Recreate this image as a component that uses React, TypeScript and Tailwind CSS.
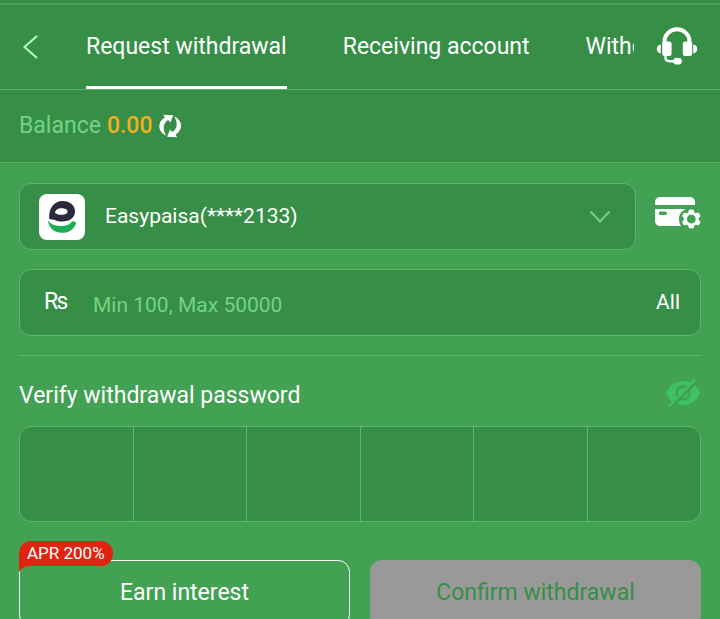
import { useState } from 'react';

const tabs = ['Request withdrawal', 'Receiving account', 'Withdrawal records'];

const accounts = [{ id: 'easypaisa', label: 'Easypaisa(****2133)' }];

function HeadsetIcon() {
  return (
    <svg viewBox="0 0 42 38" className="h-[38px] w-[42px]" fill="none">
      <path d="M8.500 17v-2.500a12.500 12.200 0 0 1 25 0V17" stroke="currentColor" strokeWidth="4" />
      <rect x="6.200" y="14.500" width="9.400" height="14.500" rx="2.200" fill="currentColor" />
      <rect x="26.800" y="14.500" width="9.400" height="14.500" rx="2.200" fill="currentColor" />
      <path d="M4.800 17.600v8.800C2.400 26.200.8 24.600.8 22s1.600-4.200 4-4.400ZM37.200 17.600v8.800c2.400-.2 4-1.800 4-4.400s-1.600-4.200-4-4.400Z" fill="currentColor" />
      <path d="M9.500 28v2.500c0 2.500 1.400 3.700 4.200 3.700h6" stroke="currentColor" strokeWidth="2.400" />
      <ellipse cx="21.500" cy="34.200" rx="4.400" ry="3.400" fill="currentColor" />
    </svg>
  );
}

function RefreshIcon() {
  return (
    <svg viewBox="0 0 23 24" className="h-6 w-[23px]" fill="currentColor">
      <path d="M7.200 21.500C-2 17.500-1.500 7.500 5.800 3.600L4.300.8 14.300 1.200 11.300 8.600 9.300 6C4 8.500 3.200 15.500 7.200 21.500Z" />
      <path
        transform="rotate(180 11.200 12)"
        d="M7.200 21.500C-2 17.500-1.500 7.500 5.800 3.600L4.300.8 14.300 1.200 11.300 8.600 9.300 6C4 8.500 3.200 15.500 7.200 21.500Z"
      />
    </svg>
  );
}

function EasypaisaLogo() {
  return (
    <svg viewBox="0 0 46 46" className="h-[46px] w-[46px] shrink-0 rounded-lg bg-white">
      <path
        fill="#2b2a3d"
        fillRule="evenodd"
        d="M23.500 7C31 7 36 11.500 36 17.500S31 27.500 23 27.500c-3.500 0-6-.8-7.500-1.800-1.800 0-3.800-.2-5.300-1C9.500 15 14.500 7 23.500 7Zm-1 7.200c-3.800 0-6.300 2-6.500 4.800 2 1.400 4 1.800 6.500 1.800 3.500 0 6-1 6-3.300s-2.500-3.300-6-3.300Z"
      />
      <path
        fill="#1fae57"
        d="M9 26.500c3 4 8 5.800 14.500 5.500 4.500-.2 7.500-1.800 9.500-4.500 1.500-.7 3.500.3 4.200 2C34.800 35.500 30 38.800 23.500 38.800 15.500 38.800 9.500 34 9 26.500Z"
      />
    </svg>
  );
}

function CardSettingsIcon() {
  return (
    <svg viewBox="0 0 46 33" className="h-[33px] w-[46px]" fill="currentColor">
      <path d="M5 0h30c2.800 0 5 2.200 5 5v3H0V5c0-2.800 2.200-5 5-5Z" />
      <path
        fillRule="evenodd"
        d="M0 12h31c-4.500 2-7 5.500-7 10 0 2.600.7 5 2 7H5c-2.800 0-5-2.200-5-5V12Zm5.500 2.600a1.700 1.700 0 0 0 0 3.400h4.800a1.700 1.700 0 0 0 0-3.400Z"
      />
      <path
        fillRule="evenodd"
        strokeLinejoin="round"
        stroke="currentColor"
        strokeWidth="1"
        d="m34.300 13.100 4 0 .7 2.600 1.900 1.100 2.600-.8 1.600 3.200-1.800 1.700v2.200l1.800 1.700-1.600 3.200-2.600-.8-1.900 1.100-.7 2.600h-4l-.7-2.600-1.900-1.100-2.600.8-1.600-3.200 1.800-1.700v-2.200l-1.800-1.700 1.600-3.200 2.600.8 1.900-1.100Zm2 4.100a4.900 4.900 0 1 0 0 9.800 4.900 4.900 0 0 0 0-9.800Z"
      />
    </svg>
  );
}

function EyeOffIcon() {
  return (
    <svg viewBox="0 0 36 30" className="h-[30px] w-9" fill="none">
      <path d="M1 15C5 6 10.500 3 18 3s13 3 17 12c-4 9-9.500 12-17 12S5 24 1 15Z" fill="#3cc265" />
      <circle cx="18" cy="15" r="6.500" stroke="#429f51" strokeWidth="2.400" />
      <path d="M7 28.500 32 3.500" stroke="#429f51" strokeWidth="3" />
      <path d="M4.500 28 29.500 2" stroke="#3cc265" strokeWidth="2.400" strokeLinecap="round" />
    </svg>
  );
}

export default function WithdrawalPage() {
  const [activeTab, setActiveTab] = useState(0);
  const [account, setAccount] = useState('easypaisa');
  const [amount, setAmount] = useState('');
  const [visible, setVisible] = useState(false);

  return (
    <div className="h-screen overflow-hidden bg-[#42a152] font-['Roboto','Noto_Sans',sans-serif] text-white">
      {/* Header */}
      <header className="border-b border-[#52b165] bg-[#378e47] pt-[3px]">
        <div className="flex h-[86px] items-stretch border-t-2 border-[#48a058]">
          <button type="button" aria-label="Back" className="flex w-[86px] shrink-0 items-center pl-[22px] text-[#b9ffc9]">
            <svg viewBox="0 0 18 24" className="h-6 w-[18px]" fill="none">
              <path d="M15 1 2.500 12 15 23" stroke="currentColor" strokeWidth="2" />
            </svg>
          </button>
          <nav className="mr-[22px] flex min-w-0 flex-1 gap-14 overflow-hidden">
            {tabs.map((tab, i) => (
              <button
                key={tab}
                type="button"
                onClick={() => setActiveTab(i)}
                className={`shrink-0 border-b-3 pt-1 text-[23px] whitespace-nowrap ${
                  activeTab === i ? 'border-white' : 'border-transparent'
                }`}
              >
                {tab}
              </button>
            ))}
          </nav>
          <button type="button" aria-label="Customer service" className="mr-[22px] shrink-0 pb-0.5">
            <HeadsetIcon />
          </button>
        </div>
      </header>

      {/* Balance */}
      <section className="flex h-[73px] items-center gap-1.5 border-b border-[#52b165] bg-[#378e47] px-[19px] text-[23px]">
        <span className="text-[#6fd585]">Balance</span>
        <span className="font-medium text-[#eeb01f]">0.00</span>
        <button type="button" aria-label="Refresh balance">
          <RefreshIcon />
        </button>
      </section>

      <main className="px-[19px] pt-5">
        {/* Account */}
        <div className="flex items-center gap-[19px]">
          <div className="flex h-[67px] min-w-0 flex-1 items-center gap-5 rounded-xl border border-[#55b968] bg-[#378e47] pr-6 pl-[19px]">
            <EasypaisaLogo />
            <select
              aria-label="Receiving account"
              value={account}
              onChange={(e) => setAccount(e.target.value)}
              className="min-w-0 flex-1 appearance-none bg-transparent text-[21px] outline-none"
            >
              {accounts.map((a) => (
                <option key={a.id} value={a.id}>
                  {a.label}
                </option>
              ))}
            </select>
            <svg viewBox="0 0 22 14" className="h-3.5 w-[22px] shrink-0 text-[#6fd585]" fill="none">
              <path d="m1.500 1.500 9.500 10 9.500-10" stroke="currentColor" strokeWidth="2" />
            </svg>
          </div>
          <button type="button" aria-label="Manage accounts" className="shrink-0 pb-1.5">
            <CardSettingsIcon />
          </button>
        </div>

        {/* Amount */}
        <div className="mt-[19px] flex h-[67px] items-center rounded-xl border border-[#55b968] bg-[#378e47] pr-5 pl-6">
          <label htmlFor="amount" className="w-[49px] shrink-0 text-[23px]">
            ₨
          </label>
          <input
            id="amount"
            inputMode="numeric"
            value={amount}
            onChange={(e) => setAmount(e.target.value)}
            placeholder="Min 100, Max 50000"
            className="min-w-0 flex-1 bg-transparent pt-1.5 text-[21px] outline-none placeholder:text-[#6fd585]"
          />
          <button type="button" onClick={() => setAmount('50000')} className="shrink-0 text-[21px]">
            All
          </button>
        </div>

        <hr className="mt-[19px] border-[#4dbb62]" />

        {/* Password */}
        <div className="flex h-[70px] items-center justify-between pt-1">
          <h2 className="pt-1.5 text-[23px]">Verify withdrawal password</h2>
          <button type="button" aria-label="Show password" onClick={() => setVisible(!visible)}>
            <EyeOffIcon />
          </button>
        </div>
        <div className="flex h-24 divide-x divide-[#55b968] overflow-hidden rounded-xl border border-[#55b968] bg-[#378e47]">
          {[1, 2, 3, 4, 5, 6].map((n) => (
            <input
              key={n}
              type={visible ? 'text' : 'password'}
              maxLength={1}
              inputMode="numeric"
              aria-label={`Password digit ${n}`}
              className="min-w-0 flex-1 bg-transparent text-center text-[23px] outline-none"
            />
          ))}
        </div>

        {/* Actions */}
        <div className="mt-[38px] grid grid-cols-2 gap-5">
          <div className="relative">
            <button type="button" className="h-[67px] w-full rounded-xl border border-white text-[23px]">
              Earn interest
            </button>
            <span className="absolute -top-[19px] left-0 flex h-[25px] items-center rounded-t-xl rounded-br-xl bg-[#df2512] px-2 text-[17px]">
              APR 200%
              <svg viewBox="0 0 10 6" className="absolute top-full left-0 h-1.5 w-2.5" fill="#df2512">
                <path d="M0 0h10C6 0 3 2 0 6Z" />
              </svg>
            </span>
          </div>
          <button type="button" disabled className="h-[67px] rounded-xl bg-[#999] text-[23px] text-[#378e47]">
            Confirm withdrawal
          </button>
        </div>
      </main>
    </div>
  );
}
